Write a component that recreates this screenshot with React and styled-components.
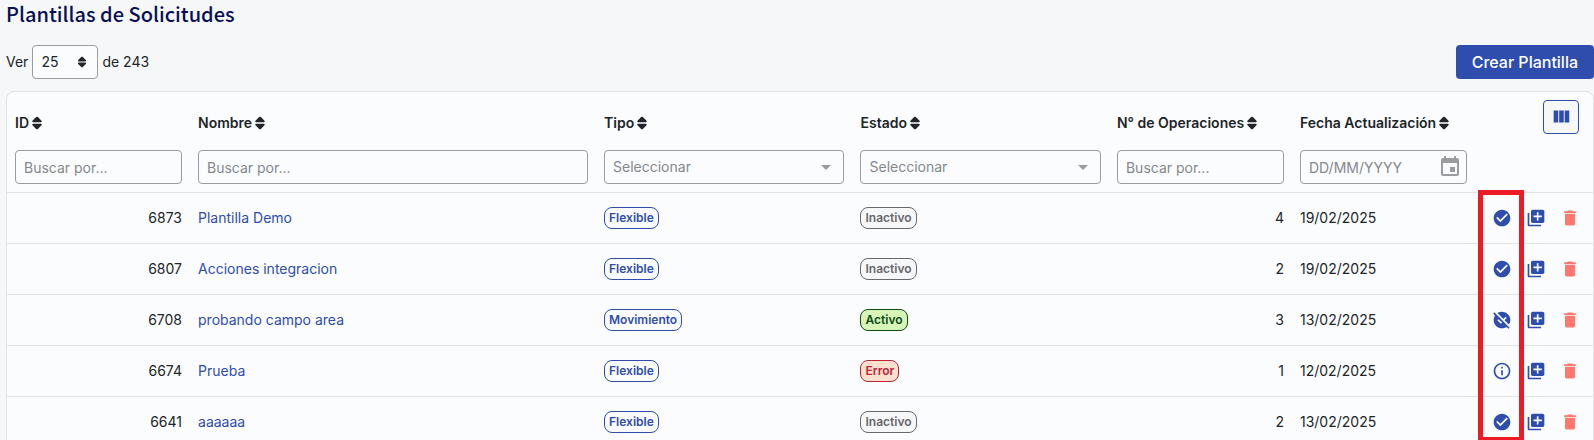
import React from 'react'
import styled, { createGlobalStyle, css } from 'styled-components';
import { MdCheckCircle, MdDelete, MdEvent, MdInfoOutline, MdLibraryAdd, MdUnpublished, MdArrowDropDown } from 'react-icons/md';

const colors = {
  primary: '#2f4dac',
  title: '#0a1055',
  text: '#212529',
  muted: '#85888c',
  control: '#9a9ca0',
  line: '#e1e3e6',
  page: '#f6f7f9',
  surface: '#fbfcfe',
  danger: '#ff776d',
  highlight: '#ed1c24',
};

const GlobalStyle = createGlobalStyle`
  * {
    box-sizing: border-box;
  }
  body {
    margin: 0;
    background: ${colors.page};
    color: ${colors.text};
    font-family: Inter, "Liberation Sans", sans-serif;
    font-size: 14px;
    line-height: 20px;
  }
  button, input, select {
    font: inherit;
  }
`;

const Page = styled.main`
  padding: 0 0 0 6px;
`;

const Title = styled.h1`
  margin: 0;
  color: ${colors.title};
  font-family: "Noto Sans CJK SC", "Noto Sans", sans-serif;
  font-size: 20px;
  font-weight: 500;
  line-height: 28px;
`;

const Toolbar = styled.div`
  display: flex;
  align-items: center;
  justify-content: space-between;
  padding: 17px 0 12px;
`;

const PageSize = styled.label`
  display: flex;
  align-items: center;
  gap: 4px;
`;

const SelectBox = styled.span`
  display: block;
  position: relative;
  svg {
    position: absolute;
    top: 50%;
    right: ${({ $inset }) => $inset || '6px'};
    transform: translateY(-50%);
    color: ${({ $dark }) => ($dark ? colors.text : colors.control)};
    pointer-events: none;
  }
`;

const field = css`
  display: block;
  width: 100%;
  height: 34px;
  padding: 0 8px;
  border: 1px solid ${colors.control};
  border-radius: 4px;
  background: ${colors.surface};
  color: ${colors.text};
  outline: none;
`;

const PageSizeSelect = styled.select`
  ${field}
  width: 66px;
  appearance: none;
`;

const Select = styled.select`
  ${field}
  color: ${colors.muted};
  appearance: none;
`;

const Input = styled.input`
  ${field}
  &::placeholder {
    color: ${colors.muted};
    opacity: 1;
  }
`;

const CreateButton = styled.button`
  height: 34px;
  padding: 0 16px;
  border: 0;
  border-radius: 4px;
  background: ${colors.primary};
  color: #fff;
  font-size: 16px;
  font-weight: 500;
  cursor: pointer;
`;

const Card = styled.section`
  position: relative;
  border: 1px solid ${colors.line};
  border-radius: 8px;
  background: ${colors.surface};
`;

const Table = styled.table`
  width: 100%;
  table-layout: fixed;
  border-collapse: separate;
  border-spacing: 0;
`;

const Col = styled.col`
  width: ${({ $width }) => $width};
`;

const Th = styled.th`
  height: 101px;
  padding: 8px;
  border-bottom: 1px solid ${colors.line};
  text-align: left;
  vertical-align: top;
  font-weight: 600;
`;

const HeadCell = styled.div`
  display: flex;
  flex-direction: column;
  gap: 18px;
  font-weight: 400;
`;

const SortButton = styled.button`
  display: flex;
  align-items: center;
  gap: 1px;
  height: 32px;
  padding: 13px 0 0;
  border: 0;
  background: none;
  color: ${colors.text};
  font-weight: 600;
  white-space: nowrap;
  cursor: pointer;
`;

const ColumnsButton = styled.button`
  display: flex;
  align-items: center;
  justify-content: center;
  width: 36px;
  height: 34px;
  margin: 0 6px 0 auto;
  padding: 0;
  border: 1px solid ${colors.primary};
  border-radius: 4px;
  background: ${colors.page};
  color: ${colors.primary};
  cursor: pointer;
`;

const Td = styled.td`
  height: 51px;
  padding: 0 8px;
  border-bottom: 1px solid ${colors.line};
  text-align: ${({ $align }) => $align || 'left'};
  vertical-align: middle;
`;

const NameLink = styled.a`
  color: ${colors.primary};
  text-decoration: none;
`;

const tones = {
  primary: { color: '#2f4dac', background: '#fbfcfe' },
  neutral: { color: '#66686c', background: '#f6f7f9' },
  success: { color: '#0b4a12', background: '#d8f5b8' },
  error: { color: '#b92638', background: '#ffe0cf' },
};

const Badge = styled.span`
  display: inline-block;
  padding: 0 4px;
  border: 1px solid ${({ $tone }) => tones[$tone].color};
  border-radius: 8px;
  background: ${({ $tone }) => tones[$tone].background};
  color: ${({ $tone }) => tones[$tone].color};
  font-size: 12px;
  font-weight: 600;
  line-height: 20px;
  vertical-align: middle;
`;

const Actions = styled.div`
  display: flex;
  justify-content: flex-end;
  gap: 14px;
  padding-right: 5px;
`;

const IconButton = styled.button`
  display: flex;
  padding: 0;
  border: 0;
  background: none;
  color: ${({ $danger }) => ($danger ? colors.danger : colors.primary)};
  cursor: pointer;
`;

// Frame drawn over the publish actions
const Highlight = styled.div`
  position: absolute;
  top: 98px;
  right: 69px;
  width: 46px;
  height: 252px;
  border: 5px solid ${colors.highlight};
  pointer-events: none;
`;

const SortIcon = ({ size = 14 }) => (
  <svg width={size} height={size} viewBox="0 0 14 14" fill="currentColor" aria-hidden="true">
    <path d="M6.1 1.100a1.250 1.250 0 0 1 1.800 0l3.600 3.700c.6.600.2 1.500-.7 1.500H3.200c-.9 0-1.300-.9-.7-1.500zM6.100 12.900a1.250 1.250 0 0 0 1.800 0l3.600-3.700c.6-.6.2-1.500-.7-1.500H3.200c-.9 0-1.300.9-.7 1.500z" />
  </svg>
);

const ColumnsIcon = () => (
  <svg width="22" height="22" viewBox="0 0 24 24" fill="currentColor" aria-hidden="true">
    <path d="M10 18h5V5h-5v13zm-6 0h5V5H4v13zM16 5v13h5V5h-5z" />
  </svg>
);

const columns = [
  { label: 'ID', filter: 'text', width: '11.54%' },
  { label: 'Nombre', filter: 'text', width: '25.6%' },
  { label: 'Tipo', filter: 'select', width: '16.17%' },
  { label: 'Estado', filter: 'select', width: '16.17%' },
  { label: 'N° de Operaciones', filter: 'text', width: '11.54%' },
  { label: 'Fecha Actualización', filter: 'date', width: '11.54%' },
];

const rows = [
  { id: 6873, name: 'Plantilla Demo', type: 'Flexible', status: 'Inactivo', operations: 4, date: '19/02/2025', action: 'publish' },
  { id: 6807, name: 'Acciones integracion', type: 'Flexible', status: 'Inactivo', operations: 2, date: '19/02/2025', action: 'publish' },
  { id: 6708, name: 'probando campo area', type: 'Movimiento', status: 'Activo', operations: 3, date: '13/02/2025', action: 'unpublish' },
  { id: 6674, name: 'Prueba', type: 'Flexible', status: 'Error', operations: 1, date: '12/02/2025', action: 'info' },
  { id: 6641, name: 'aaaaaa', type: 'Flexible', status: 'Inactivo', operations: 2, date: '13/02/2025', action: 'publish' },
];

const statusTone = { Inactivo: 'neutral', Activo: 'success', Error: 'error' };

const actionIcons = {
  publish: { Icon: MdCheckCircle, label: 'Activar' },
  unpublish: { Icon: MdUnpublished, label: 'Desactivar' },
  info: { Icon: MdInfoOutline, label: 'Ver error' },
};

const Filter = ({ type, label }) => {
  if (type === 'select') {
    return (
      <SelectBox>
        <Select aria-label={label}>
          <option>Seleccionar</option>
        </Select>
        <MdArrowDropDown size={24} />
      </SelectBox>
    );
  }
  if (type === 'date') {
    return (
      <SelectBox $inset="5px">
        <Input aria-label={label} placeholder="DD/MM/YYYY" />
        <MdEvent size={24} />
      </SelectBox>
    );
  }
  return <Input aria-label={label} placeholder="Buscar por..." />;
};

const Row = ({ row }) => {
  const { Icon, label } = actionIcons[row.action];
  return (
    <tr>
      <Td $align="right">{row.id}</Td>
      <Td><NameLink href={`#${row.id}`}>{row.name}</NameLink></Td>
      <Td><Badge $tone="primary">{row.type}</Badge></Td>
      <Td><Badge $tone={statusTone[row.status]}>{row.status}</Badge></Td>
      <Td $align="right">{row.operations}</Td>
      <Td>{row.date}</Td>
      <Td>
        <Actions>
          <IconButton aria-label={label}><Icon size={20} /></IconButton>
          <IconButton aria-label="Duplicar"><MdLibraryAdd size={20} /></IconButton>
          <IconButton aria-label="Eliminar" $danger><MdDelete size={20} /></IconButton>
        </Actions>
      </Td>
    </tr>
  );
};

const App = () => {
  const [pageSize, setPageSize] = React.useState('25');
  return (
    <Page>
      <GlobalStyle />
      <Title>Plantillas de Solicitudes</Title>
      <Toolbar>
        <PageSize>
          Ver
          <SelectBox $inset="10px" $dark>
            <PageSizeSelect value={pageSize} onChange={(e) => setPageSize(e.target.value)}>
              <option>25</option>
              <option>50</option>
              <option>100</option>
            </PageSizeSelect>
            <SortIcon size={12} />
          </SelectBox>
          de 243
        </PageSize>
        <CreateButton>Crear Plantilla</CreateButton>
      </Toolbar>
      <Card>
        <Table>
          <colgroup>
            {columns.map((c) => <Col key={c.label} $width={c.width} />)}
            <Col $width="7.44%" />
          </colgroup>
          <thead>
            <tr>
              {columns.map((c) => (
                <Th key={c.label}>
                  <HeadCell>
                    <SortButton>{c.label}<SortIcon /></SortButton>
                    <Filter type={c.filter} label={c.label} />
                  </HeadCell>
                </Th>
              ))}
              <Th>
                <ColumnsButton aria-label="Columnas"><ColumnsIcon /></ColumnsButton>
              </Th>
            </tr>
          </thead>
          <tbody>
            {rows.map((row) => <Row key={row.id} row={row} />)}
          </tbody>
        </Table>
        <Highlight />
      </Card>
    </Page>
  );
};

export default App
